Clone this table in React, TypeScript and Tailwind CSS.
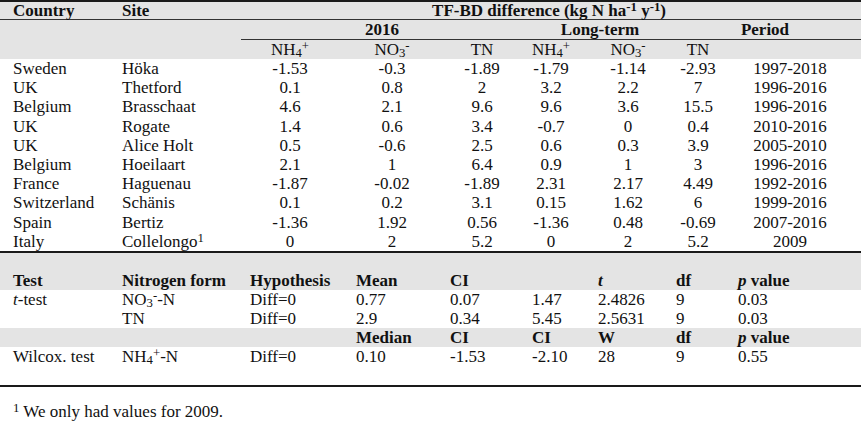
import React from "react";

const DCOLS = "grid grid-cols-[122px_119px_98px_106px_74px_64px_90px_50px_134px_1fr]";
const BCOLS = "grid grid-cols-[122px_128px_106px_94px_82px_66px_78px_62px_1fr]";

const Sub = ({ children }: { children: React.ReactNode }) => (
  <sub className="bottom-[-0.15em]">{children}</sub>
);
const Sup = ({ children }: { children: React.ReactNode }) => (
  <sup className="top-[-0.4em]">{children}</sup>
);

const NH4 = () => (
  <span>
    NH<Sub>4</Sub>
    <Sup>+</Sup>
  </span>
);
const NO3 = () => (
  <span>
    NO<Sub>3</Sub>
    <Sup>-</Sup>
  </span>
);

type Row = [string, React.ReactNode, string, string, string, string, string, string, string];

const rows: Row[] = [
  ["Sweden", "Höka", "-1.53", "-0.3", "-1.89", "-1.79", "-1.14", "-2.93", "1997-2018"],
  ["UK", "Thetford", "0.1", "0.8", "2", "3.2", "2.2", "7", "1996-2016"],
  ["Belgium", "Brasschaat", "4.6", "2.1", "9.6", "9.6", "3.6", "15.5", "1996-2016"],
  ["UK", "Rogate", "1.4", "0.6", "3.4", "-0.7", "0", "0.4", "2010-2016"],
  ["UK", "Alice Holt", "0.5", "-0.6", "2.5", "0.6", "0.3", "3.9", "2005-2010"],
  ["Belgium", "Hoeilaart", "2.1", "1", "6.4", "0.9", "1", "3", "1996-2016"],
  ["France", "Haguenau", "-1.87", "-0.02", "-1.89", "2.31", "2.17", "4.49", "1992-2016"],
  ["Switzerland", "Schänis", "0.1", "0.2", "3.1", "0.15", "1.62", "6", "1999-2016"],
  ["Spain", "Bertiz", "-1.36", "1.92", "0.56", "-1.36", "0.48", "-0.69", "2007-2016"],
  [
    "Italy",
    <span>
      Collelongo<Sup>1</Sup>
    </span>,
    "0",
    "2",
    "5.2",
    "0",
    "2",
    "5.2",
    "2009",
  ],
];

export default function App() {
  return (
    <div className="w-[861px] h-[428px] bg-white text-[#111] text-[17px] overflow-hidden font-['Liberation_Serif','Times_New_Roman',serif]">
      {/* top table */}
      <div className="border-t-2 border-[#1a1a1a]">
        <div className="bg-[#e4e4e4]">
          <div className={`${DCOLS} h-[18px] leading-[18px] font-bold border-b border-[#333]`}>
            <div className="pl-[13px]">Country</div>
            <div>Site</div>
            <div className="col-span-8 text-center pr-[4px]">
              TF-BD difference (kg N ha<Sup>-1</Sup> y<Sup>-1</Sup>)
            </div>
          </div>
          <div className="grid grid-cols-[241px_282px_154px_176px_1fr] h-[19px] leading-[19px] font-bold">
            <div></div>
            <div className="text-center">2016</div>
            <div className="text-center">Long-term</div>
            <div className="text-center">Period</div>
            <div></div>
          </div>
          <div className="ml-[241px] border-t border-[#333]"></div>
          <div className={`${DCOLS} h-[19px] leading-[19px]`}>
            <div></div>
            <div></div>
            <div className="text-center">
              <NH4 />
            </div>
            <div className="text-center">
              <NO3 />
            </div>
            <div className="text-center">TN</div>
            <div className="text-center">
              <NH4 />
            </div>
            <div className="text-center">
              <NO3 />
            </div>
            <div className="text-center">TN</div>
            <div></div>
            <div></div>
          </div>
        </div>
        {rows.map((r, i) => (
          <div key={i} className={`${DCOLS} h-[19.2px] leading-[19.2px]`}>
            <div className="pl-[13px]">{r[0]}</div>
            <div>{r[1]}</div>
            {r.slice(2).map((v, j) => (
              <div key={j} className="text-center">
                {v as string}
              </div>
            ))}
            <div></div>
          </div>
        ))}
      </div>

      {/* bottom table */}
      <div className="border-t-2 border-[#1a1a1a]">
        <div className="bg-[#e4e4e4] pt-[18px]">
          <div className={`${BCOLS} h-[19px] leading-[19px] font-bold`}>
            <div className="pl-[13px]">Test</div>
            <div>Nitrogen form</div>
            <div>Hypothesis</div>
            <div>Mean</div>
            <div>CI</div>
            <div></div>
            <div className="italic">t</div>
            <div>df</div>
            <div>
              <span className="italic">p</span> value
            </div>
          </div>
        </div>
        <div className={`${BCOLS} h-[19px] leading-[19px]`}>
          <div className="pl-[13px]">
            <span className="italic">t</span>-test
          </div>
          <div>
            NO<Sub>3</Sub>
            <Sup>-</Sup>-N
          </div>
          <div>Diff=0</div>
          <div>0.77</div>
          <div>0.07</div>
          <div>1.47</div>
          <div>2.4826</div>
          <div>9</div>
          <div>0.03</div>
        </div>
        <div className={`${BCOLS} h-[19px] leading-[19px]`}>
          <div></div>
          <div>TN</div>
          <div>Diff=0</div>
          <div>2.9</div>
          <div>0.34</div>
          <div>5.45</div>
          <div>2.5631</div>
          <div>9</div>
          <div>0.03</div>
        </div>
        <div className={`${BCOLS} h-[19px] leading-[19px] font-bold bg-[#e4e4e4]`}>
          <div></div>
          <div></div>
          <div></div>
          <div>Median</div>
          <div>CI</div>
          <div>CI</div>
          <div>W</div>
          <div>df</div>
          <div>
            <span className="italic">p</span> value
          </div>
        </div>
        <div className={`${BCOLS} h-[19px] leading-[19px]`}>
          <div className="pl-[13px]">Wilcox. test</div>
          <div>
            NH<Sub>4</Sub>
            <Sup>+</Sup>-N
          </div>
          <div>Diff=0</div>
          <div>0.10</div>
          <div>-1.53</div>
          <div>-2.10</div>
          <div>28</div>
          <div>9</div>
          <div>0.55</div>
        </div>
        <div className="h-[19px]"></div>
      </div>
      <div className="border-t-2 border-[#1a1a1a]"></div>
      <div className="mt-[15px] pl-[13px] h-[19px] leading-[19px]">
        <Sup>1</Sup> We only had values for 2009.
      </div>
    </div>
  );
}
